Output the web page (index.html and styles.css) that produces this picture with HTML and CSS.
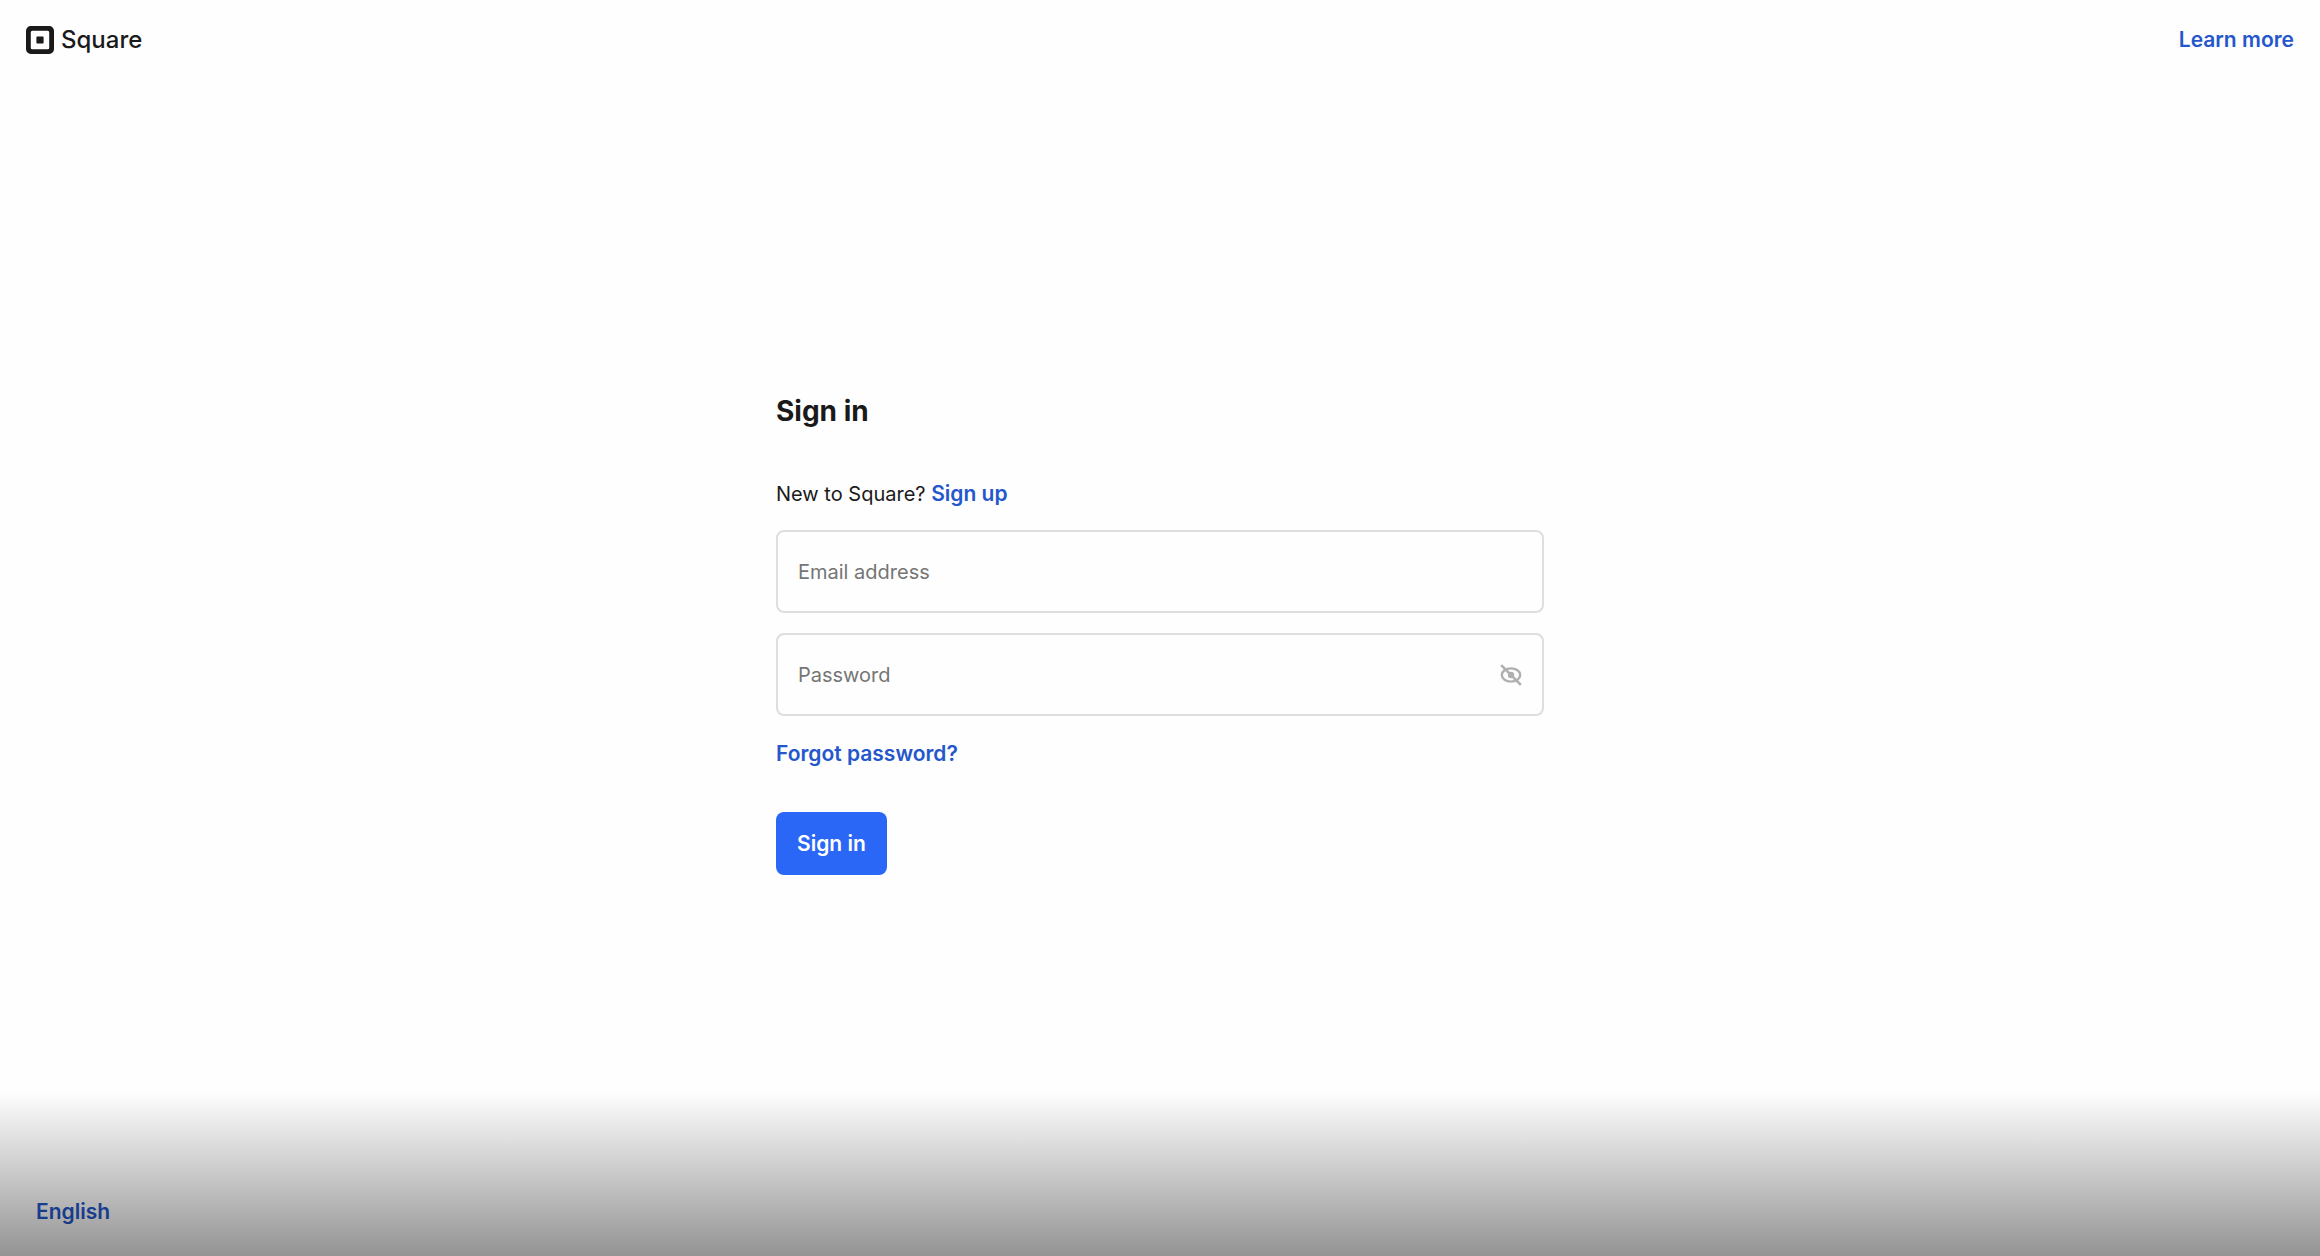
FILE: index.html
```html
<!DOCTYPE html>
<html lang="en">
<head>
    <meta charset="UTF-8">
    <meta name="viewport" content="width=device-width, initial-scale=1.0">
    <title>Sign in - Square</title>
    <link rel="stylesheet" href="styles.css">
</head>
<body>
    <header class="header">
        <a href="#" class="logo">
            <svg class="logo-icon" viewBox="0 0 28 28" aria-hidden="true">
                <path fill="currentColor" fill-rule="evenodd" d="M4.7 0h18.6A4.7 4.7 0 0 1 28 4.7v18.6a4.7 4.7 0 0 1-4.7 4.7H4.7A4.7 4.7 0 0 1 0 23.3V4.7A4.7 4.7 0 0 1 4.7 0zM6.300 4.800a1.500 1.500 0 0 0-1.500 1.500v15.400a1.500 1.500 0 0 0 1.500 1.500h15.400a1.500 1.500 0 0 0 1.500-1.500V6.300a1.500 1.500 0 0 0-1.500-1.500zM11.200 10.400h5.600a.8.8 0 0 1 .8.8v5.600a.8.8 0 0 1-.8.8h-5.600a.8.8 0 0 1-.8-.8v-5.600a.8.8 0 0 1 .8-.8z"/>
            </svg>
            <span>Square</span>
        </a>
        <a href="#" class="link">Learn more</a>
    </header>

    <main class="main">
        <form class="signin">
            <h1>Sign in</h1>
            <p class="signup">New to Square? <a href="#" class="link">Sign up</a></p>
            <div class="field">
                <input type="email" name="email" placeholder="Email address" aria-label="Email address">
            </div>
            <div class="field">
                <input type="password" name="password" placeholder="Password" aria-label="Password">
                <button type="button" class="toggle" aria-label="Show password">
                    <svg viewBox="0 0 22 22" fill="none" stroke="currentColor" aria-hidden="true">
                        <ellipse cx="11" cy="11" rx="9.200" ry="6.600" stroke-width="2.400"/>
                        <circle cx="11" cy="11" r="3.200" fill="currentColor" stroke="none"/>
                        <path stroke-width="2.600" d="M1.200 1.200l19.600 19.600"/>
                    </svg>
                </button>
            </div>
            <a href="#" class="link forgot">Forgot password?</a>
            <button type="submit" class="btn">Sign in</button>
        </form>
    </main>

    <footer class="footer">
        <button type="button" class="link language">English</button>
    </footer>
</body>
</html>
```

FILE: styles.css
```css
*{
    padding: 0;
    margin: 0;
    box-sizing: border-box;
}
body{
    display: flex;
    flex-direction: column;
    min-height: 100vh;
    position: relative;
    background-color: #fefefe;
    color: #1a1a1a;
    font-family: 'Inter', sans-serif;
    font-size: 20px;
    line-height: 28px;
}
/* shade along the bottom edge */
body::after{
    content: "";
    position: absolute;
    left: 0;
    right: 0;
    bottom: 0;
    height: 164px;
    background-image: linear-gradient(rgba(0,0,0,0), rgba(0,0,0,0.42));
    pointer-events: none;
}
button,
input{
    font: inherit;
    border: 0;
    background: none;
}
button{
    cursor: pointer;
}
.link{
    color: #2456cc;
    font-size: 21px;
    font-weight: 600;
    text-decoration: none;
}
.header,
.footer{
    display: flex;
    align-items: center;
    justify-content: space-between;
    height: 80px;
    padding: 0 26px;
}
.logo{
    display: flex;
    align-items: center;
    gap: 7px;
    color: #1a1a1a;
    font-size: 24px;
    font-weight: 500;
    text-decoration: none;
}
.logo-icon{
    width: 28px;
    height: 28px;
}
.main{
    flex: 1;
    display: flex;
    align-items: center;
    justify-content: center;
}
.signin{
    width: 100%;
    max-width: 768px;
}
h1{
    font-size: 28px;
    font-weight: 700;
    line-height: 60px;
    margin-bottom: 39px;
}
.signup{
    margin-bottom: 22px;
}
.field{
    display: flex;
    align-items: center;
    height: 83px;
    margin-bottom: 20px;
    padding: 0 20px;
    border: 2px solid #dedede;
    border-radius: 8px;
}
.field input{
    flex: 1;
    height: 100%;
    outline: 0;
    color: #1a1a1a;
}
.field input::placeholder{
    color: #757575;
    opacity: 1;
}
.field:focus-within{
    border-color: #2a67f6;
}
.toggle{
    display: flex;
    color: #b0b0b0;
}
.toggle svg{
    width: 22px;
    height: 22px;
}
.forgot{
    display: block;
    width: fit-content;
    margin: 24px 0 44px;
}
.btn{
    height: 63px;
    padding: 0 21px;
    border-radius: 8px;
    background-color: #2a67f6;
    color: white;
    font-size: 21px;
    font-weight: 600;
}
.footer{
    padding: 0 36px 8px;
}
```
